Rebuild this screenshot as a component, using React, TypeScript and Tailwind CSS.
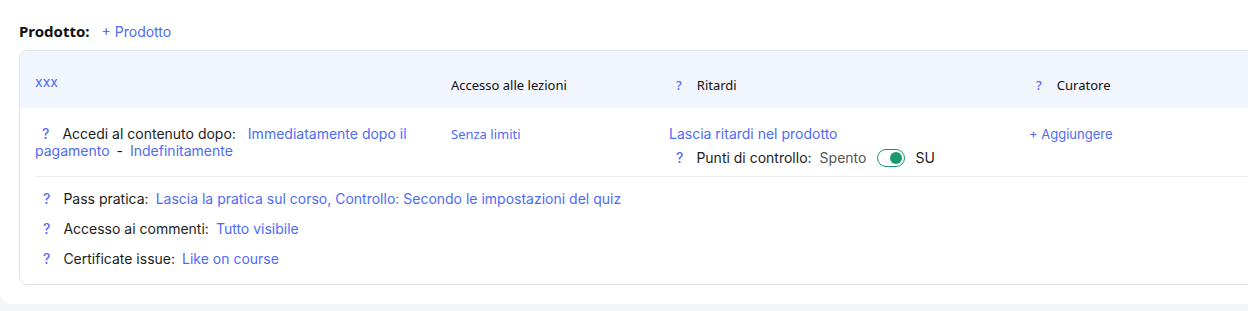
import React, { useState } from 'react';

const Help = () => (
  <span className="inline-block px-[7px] mr-[6px] text-[#5b6cf9] font-medium">?</span>
);

const Row = ({ label, value }: { label: string; value: string }) => (
  <div className="flex items-center h-[30px] pl-[1px]">
    <Help />
    <span className="text-[#1c1c1c]">{label}</span>
    <span className="ml-[7px] text-[#4f6bf5]">{value}</span>
  </div>
);

const App: React.FC = () => {
  const [checkpoints, setCheckpoints] = useState(true);

  return (
    <div className="w-[1248px] h-[311px] bg-[#f3f6f9] overflow-hidden" style={{ fontFamily: 'Inter, "Noto Sans", sans-serif' }}>
      <div className="w-[1270px] h-[304px] bg-white rounded-bl-[12px] pl-[19px] pt-[22px]">
        <div className="flex items-center h-[18px] text-[14px]">
          <span className="font-bold text-[15px] text-[#111]" style={{ fontFamily: '"Noto Sans", sans-serif' }}>Prodotto:</span>
          <button className="ml-[12px] text-[#4f6bf5]">+ Prodotto</button>
        </div>

        <div className="mt-[10px] h-[235px] border border-[#e1e1ef] rounded-[8px] overflow-hidden text-[14px]">
          {/* header */}
          <div className="flex h-[57px] bg-[#f1f5fe] text-[13px]" style={{ fontFamily: '"Noto Sans", sans-serif' }}>
            <div className="w-[431px] pl-[15px] pt-[20px] text-[14px] text-[#4f6bf5]" style={{ fontFamily: 'Inter, sans-serif' }}>xxx</div>
            <div className="w-[218px] pt-[25px] text-[#111]">Accesso alle lezioni</div>
            <div className="w-[360px] pt-[25px] text-[#111] flex items-start">
              <Help />
              <span className="ml-[2px]">Ritardi</span>
            </div>
            <div className="pt-[25px] text-[#111] flex items-start">
              <Help />
              <span className="ml-[2px]">Curatore</span>
            </div>
          </div>

          {/* main row */}
          <div className="mx-[15px] flex pt-[17px] pb-[9px] border-b border-[#ececf0] leading-[18px]">
            <div className="w-[392px] text-[#1c1c1c] leading-[17px]">
              <Help />
              <span>Accedi al contenuto dopo:</span>
              <span className="ml-[12px] text-[#4f6bf5]">Immediatamente dopo il pagamento</span>
              <span className="mx-[7px]">-</span>
              <span className="text-[#4f6bf5]">Indefinitamente</span>
            </div>
            <div className="ml-[24px] w-[218px] text-[13px] text-[#4f6bf5]" style={{ fontFamily: '"Noto Sans", sans-serif' }}>
              Senza limiti
            </div>
            <div className="w-[360px]">
              <div className="text-[#4f6bf5]">Lascia ritardi nel prodotto</div>
              <div className="mt-[6px] flex items-center">
                <Help />
                <span className="text-[#1c1c1c]">Punti di controllo:</span>
                <span className="ml-[8px] text-[#555]">Spento</span>
                <button
                  onClick={() => setCheckpoints(!checkpoints)}
                  className="ml-[11px] w-[28px] h-[18px] rounded-full border-[1.5px] border-[#1a9a6b] flex items-center px-[2px] justify-end"
                >
                  <span className="block w-[12px] h-[12px] rounded-full bg-[#1a9a6b]" />
                </button>
                <span className="ml-[10px] text-[#1c1c1c]">SU</span>
              </div>
            </div>
            <div className="text-[13px] text-[#4f6bf5]">+ Aggiungere</div>
          </div>

          {/* settings */}
          <div className="px-[15px] pt-[6px]">
            <Row label="Pass pratica:" value="Lascia la pratica sul corso, Controllo: Secondo le impostazioni del quiz" />
            <Row label="Accesso ai commenti:" value="Tutto visibile" />
            <Row label="Certificate issue:" value="Like on course" />
          </div>
        </div>
      </div>
    </div>
  );
};

export default App;
